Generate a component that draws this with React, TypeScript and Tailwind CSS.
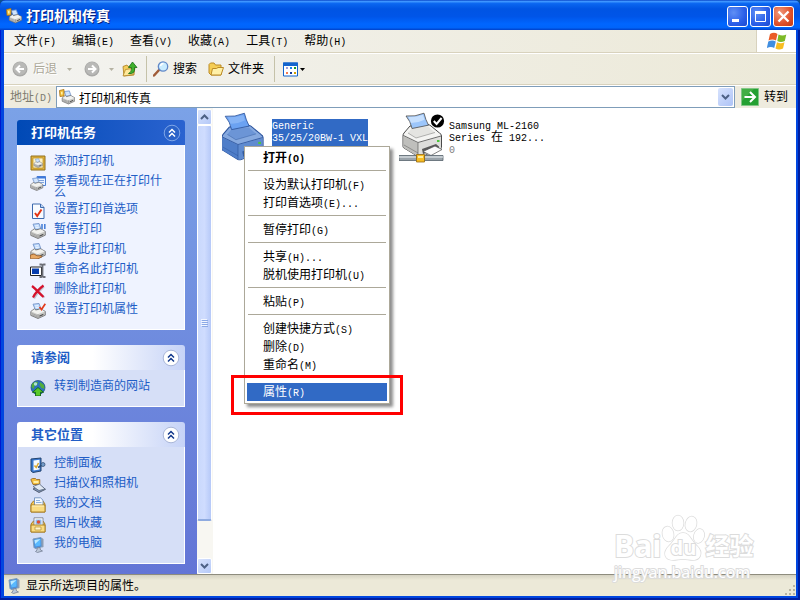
import type { ReactNode } from 'react';

type IconName =
  | 'add'
  | 'queue'
  | 'prefs'
  | 'pause'
  | 'share'
  | 'rename'
  | 'delete'
  | 'props'
  | 'globe'
  | 'control'
  | 'scanner'
  | 'docs'
  | 'pictures'
  | 'computer'
  | 'printers';

interface Task {
  icon: IconName;
  label: string;
}

interface MenuEntry {
  label: string;
  bold?: boolean;
  active?: boolean;
}

const MENUS = ['文件(F)', '编辑(E)', '查看(V)', '收藏(A)', '工具(T)', '帮助(H)'];

const PRINTER_TASKS: Task[] = [
  { icon: 'add', label: '添加打印机' },
  { icon: 'queue', label: '查看现在正在打印什么' },
  { icon: 'prefs', label: '设置打印首选项' },
  { icon: 'pause', label: '暂停打印' },
  { icon: 'share', label: '共享此打印机' },
  { icon: 'rename', label: '重命名此打印机' },
  { icon: 'delete', label: '删除此打印机' },
  { icon: 'props', label: '设置打印机属性' },
];

const SEE_ALSO: Task[] = [{ icon: 'globe', label: '转到制造商的网站' }];

const OTHER_PLACES: Task[] = [
  { icon: 'control', label: '控制面板' },
  { icon: 'scanner', label: '扫描仪和照相机' },
  { icon: 'docs', label: '我的文档' },
  { icon: 'pictures', label: '图片收藏' },
  { icon: 'computer', label: '我的电脑' },
];

const CONTEXT_MENU: MenuEntry[][] = [
  [{ label: '打开(O)', bold: true }],
  [{ label: '设为默认打印机(F)' }, { label: '打印首选项(E)...' }],
  [{ label: '暂停打印(G)' }],
  [{ label: '共享(H)...' }, { label: '脱机使用打印机(U)' }],
  [{ label: '粘贴(P)' }],
  [{ label: '创建快捷方式(S)' }, { label: '删除(D)' }, { label: '重命名(M)' }],
  [{ label: '属性(R)', active: true }],
];

// Latin runs are half as wide as the Chinese characters beside them
function Mixed({ text }: { text: string }) {
  return (
    <>
      {text.split(/([\x20-\x7e]+)/).map((part, i) =>
        i % 2 ? (
          <span key={i} className="font-['Liberation_Mono','Noto_Sans_CJK_SC',monospace] text-[10px] leading-2">
            {part}
          </span>
        ) : (
          part
        ),
      )}
    </>
  );
}

function MiniPrinter() {
  return (
    <g>
      <path d="M3 1.2 9 .4l2 5.6-5.500 1z" fill="#b9d6fb" stroke="#6d8ec4" strokeWidth=".8" />
      <path d="m5 3 3.400-.5M5.600 4.600l3.600-.5" stroke="#fff" strokeWidth=".7" />
      <path d="m.8 8.500 3.700-2.800 1 1.300 5-1.200L15.300 8.400v3.800L8 15.500.8 12.400z" fill="#c9c9c6" stroke="#6a6a6a" strokeWidth=".8" />
      <path d="m1.300 8.600 6.500 2.700 7-2.800-4-2.200-5 1.400-1.200-1.500z" fill="#f2f2ef" />
      <path d="M8 11.400v3.800" stroke="#8b8b8b" strokeWidth=".8" />
      <path d="m9.400 12.500 4-1.800v1.200l-4 1.800z" fill="#4c4c4c" />
      <path d="m2 10.500 5 2M2 11.800l5 2" stroke="#8a8a8a" strokeWidth=".6" />
    </g>
  );
}

function Folder() {
  return (
    <g>
      <path d="M1 7l2.500-3h9.500l2 3v8H1z" fill="#f2c654" stroke="#a5781a" strokeWidth=".9" />
    </g>
  );
}

const GLYPHS: Record<IconName, ReactNode> = {
  add: (
    <>
      <path d="M1 1h14v14H1z" fill="#e0b23b" stroke="#927020" />
      <path d="M3 3h10v10H3z" fill="#fff3c4" stroke="#b48b25" strokeWidth=".7" />
      <g transform="translate(3.500 3.500) scale(.58)">
        <MiniPrinter />
      </g>
    </>
  ),
  queue: (
    <>
      <path d="M7 1.5h8.500v9H7z" fill="#eaf3ff" stroke="#4c7fd2" />
      <path d="M7 1.500h8.500v2H7z" fill="#3d78dc" />
      <path d="M9 5.500h5M9 7.500h5" stroke="#7fa3dd" />
      <g transform="translate(0 2.500) scale(.84)">
        <MiniPrinter />
      </g>
    </>
  ),
  prefs: (
    <>
      <path d="M2.500 1h8L14 4.500v11H2.500z" fill="#f8fbff" stroke="#3d6aae" />
      <path d="M10.500 1v3.500H14" fill="#bcd3f4" stroke="#3d6aae" />
      <path d="m5 10 2.200 3 4.300-6.500" fill="none" stroke="#e33514" strokeWidth="2" />
    </>
  ),
  pause: (
    <>
      <MiniPrinter />
      <path d="M12 1v5M14.800 1v5" stroke="#4980d8" strokeWidth="1.600" />
    </>
  ),
  share: (
    <>
      <MiniPrinter />
      <path d="M.5 12 4 11l3 1.800h4l1 1-4 2H.5z" fill="#e8a964" stroke="#955a26" strokeWidth=".8" />
    </>
  ),
  rename: (
    <>
      <path d="M.5 4h11v8.500H.5z" fill="#fff" stroke="#222" />
      <path d="M2 5.500h7V11H2z" fill="#083eae" />
      <path d="M9.500 1.500h1.800q1.200 0 1.200 1v10q0 1.500-1.200 1.500H9.500M15.500 1.500h-1.800q-1.200 0-1.200 1v10q0 1.500 1.200 1.500h1.800" fill="none" stroke="#6c6e76" strokeWidth="1.800" />
    </>
  ),
  delete: (
    <>
      <path d="M3 4c4 3 7 7 11.500 10.500M14 3.500C10 7 6.500 11 4 15.500" fill="none" stroke="#6b6b7a" strokeWidth="2" opacity=".35" />
      <path d="M2 3c4 3 7 7 11.500 11M13.500 2.500C9.500 5.500 5.500 9.500 3 14.500" fill="none" stroke="#d6122c" strokeWidth="2.200" />
    </>
  ),
  props: (
    <>
      <MiniPrinter />
      <path d="m9.500 4 2 2.500L15.300.8" fill="none" stroke="#e23b1c" strokeWidth="1.700" />
    </>
  ),
  globe: (
    <>
      <circle cx="8" cy="7.500" r="7" fill="#2b71bd" stroke="#174778" strokeWidth=".7" />
      <path d="M2 4q3-3.300 6-2l-1 3-2.500 1-1 3-2-2zM10 2l4 3 .5 4-3-1-2-3z" fill="#52ae3b" />
      <circle cx="5.500" cy="4" r="1.700" fill="#c5edff" opacity=".8" />
      <path d="m8 7.500 5.500 4.800h-3V16h-5v-3.700h-3z" fill="#58c928" stroke="#126515" strokeWidth=".9" />
    </>
  ),
  control: (
    <>
      <path d="m1 2 10-1v13L3 15.500 1 14z" fill="#3676cf" stroke="#23446f" />
      <path d="m3.500 3.500 6-.8v9.800l-6 1z" fill="#f4faff" />
      <path d="m4.500 8.500 1.700 2L8.500 6" fill="none" stroke="#dba729" strokeWidth="1.500" />
      <path d="m8 10.500 5-3" stroke="#2b4e7a" strokeWidth="1.500" />
      <circle cx="13" cy="7.500" r="2" fill="#739cc9" stroke="#2d486d" strokeWidth=".7" />
    </>
  ),
  scanner: (
    <>
      <path d="M.8 2.500 2.500 1.500h3l1 1h3.300v5H3z" fill="#f3bd3e" stroke="#93631a" strokeWidth=".8" />
      <path d="M3.500 4h5v2h-5z" fill="#fff0a7" />
      <path d="m3 12 7-3.500 5.500 3.800-6.500 3.200z" fill="#7f94b8" stroke="#4b5669" strokeWidth=".9" />
      <path d="m3 9.500 6.500-2.500 5.500 5-6 1.500z" fill="#e2eaf5" stroke="#59677c" strokeWidth=".8" />
    </>
  ),
  docs: (
    <>
      <Folder />
      <path d="M4.500.8h6L13 3.200V10H4.500z" fill="#f4f9ff" stroke="#5f83b6" strokeWidth=".8" />
      <path d="M6 3.500h4M6 5.500h5.500" stroke="#8eb1df" />
      <path d="M1 8h14v7H1z" fill="#fadc82" stroke="#a5781a" strokeWidth=".9" />
      <path d="M2 9h12" stroke="#fff3c0" />
    </>
  ),
  pictures: (
    <>
      <Folder />
      <path d="M4 .8h9V10H4z" fill="#fff" stroke="#6e7788" strokeWidth=".8" />
      <path d="M5.500 2.500h6v5h-6z" fill="#8bbcf3" />
      <circle cx="8.500" cy="5" r="1.800" fill="#df4d31" />
      <path d="M1 8h14v7H1z" fill="#fadc82" stroke="#a5781a" strokeWidth=".9" />
      <path d="M5 10h6v3H5z" fill="#fff5c9" stroke="#b38d31" strokeWidth=".7" />
    </>
  ),
  computer: (
    <>
      <path d="m3 2 8-1.500 1 1v8.300L5 11.500l-1-1z" fill="#4b8edc" stroke="#7f9cb9" />
      <path d="m4.500 3 6-1v6.500l-5 1z" fill="#58b9ff" />
      <path d="m4.500 3 6-1L5 7z" fill="#bceaff" />
      <path d="m11 1 2.500 1v8l-1.500.5z" fill="#8c9db4" />
      <path d="m7 11 3-.5.5 2.500 2 1-5 1.500-2-1L7 13z" fill="#bcc8d9" stroke="#6b778c" strokeWidth=".7" />
    </>
  ),
  printers: (
    <>
      <g transform="translate(2.500 1.500) scale(.87)">
        <MiniPrinter />
      </g>
      <path d="m.5 1.500 4.500-1v6.500l-4 .5z" fill="#f7c33e" stroke="#a36e14" strokeWidth=".8" />
      <path d="m2 3 1.500-.3v2.500L2 5.500z" fill="#fff2a8" />
    </>
  ),
};

function Icon({ name }: { name: IconName }) {
  return (
    <svg viewBox="0 0 16 16" className="size-4 shrink-0" aria-hidden="true">
      {GLYPHS[name]}
    </svg>
  );
}

function LargePrinter({ selected = false }: { selected?: boolean }) {
  const c = selected
    ? { line: '#2b539c', top: '#86a9df', lid: '#6c95d6', left: '#4f7ec9', right: '#5f8bd0', paper: '#6ba2f2', sheen: '#8fbaf7', dark: '#345b9e', tray: '#8fb0e4' }
    : { line: '#4a4a4a', top: '#f4f4f2', lid: '#e4e4e1', left: '#bfbfbc', right: '#dededb', paper: '#9cc6fb', sheen: '#d6e8ff', dark: '#5a5a5a', tray: '#fbfbfb' };
  return (
    <svg viewBox={selected ? '4 0 45 48.75' : '0 0 48 52'} className="h-[52px] w-12 shrink-0" aria-hidden="true">
      <path d="M11 14 29 12.500q2 .5 3 1.500l8.500 7q2 1 2 3v11.500q0 1-1 1.500L22 44.500q-1.500.5-3 0L5 36q-1-.5-1-1.500V24q0-2 1-3z" fill={c.top} stroke={c.line} strokeLinejoin="round" />
      <path d="M4.500 24 19 31v13.500L5 36q-.5-.5-.5-1.500z" fill={c.left} />
      <path d="m19 31 23-6.500v11q0 1-1 1.500L22 44.200q-1.500.5-3 0z" fill={c.right} />
      <path d="M13 16 29 14.500l7 6L17 26 9 21z" fill={c.lid} />
      <path d="M4.500 23.500 19 30.500l23-6.500" fill="none" stroke={c.line} strokeWidth=".8" />
      <path d="M19 31v13" stroke={c.line} strokeWidth=".6" />
      <path d="M9 21l8 5 19-5.500" fill="none" stroke={c.dark} strokeWidth=".7" opacity=".6" />
      <path d="M7 4q9 1 18-2.800 1.500 6.500 4.500 12L13 16.500Q11.500 9 7 4z" fill={c.paper} stroke={c.line} strokeWidth=".8" />
      <path d="M9.500 5q8 .3 14.500-2.300l1.500 5Q19 11 12 11z" fill={c.sheen} opacity=".75" />
      <path d="m23 37 14-5 3 2.500v2.500l-16 5z" fill={c.dark} />
      <path d="m24 39.500 12-5.500 7 3.500-11 6z" fill={c.tray} stroke={c.line} strokeWidth=".7" />
      <path d="m5 33 14 8" stroke={c.line} strokeWidth=".7" opacity=".6" />
      <path d="M38 28h2.500v2H38z" fill="#4cc73a" />
      {!selected && (
        <>
          <path d="M0 43.500h17.500v5H0zM25.500 43.500H44v5H25.500z" fill="#9aa3aa" stroke="#55626c" strokeWidth=".8" />
          <path d="M0 45h17m9 0h18" stroke="#eef4f6" strokeWidth="1.200" />
          <path d="M17.500 42.500h8v7.500h-8z" fill="#f7bd25" stroke="#94670e" strokeWidth=".8" />
          <path d="M19 44h5v2h-5z" fill="#ffed9b" />
          <circle cx="38.500" cy="9" r="6.600" fill="#000" />
          <path d="m34.800 9 2.800 3 5-6" fill="none" stroke="#fff" strokeWidth="2" />
        </>
      )}
    </svg>
  );
}

function Caret({ dim = false }: { dim?: boolean }) {
  return (
    <svg viewBox="0 0 5 3" className={dim ? 'h-[3px] w-[5px] fill-[#b5b2a3]' : 'h-[3px] w-[5px] fill-black'} aria-hidden="true">
      <path d="M0 0h5L2.500 3z" />
    </svg>
  );
}

function Chevron({ up = false }: { up?: boolean }) {
  return (
    <svg viewBox="0 0 9 6" className="h-[6px] w-[9px]" aria-hidden="true">
      <path d={up ? 'M1 5l3.500-3.500L8 5' : 'M1 1l3.500 3.500L8 1'} fill="none" stroke="#4d6185" strokeWidth="2" />
    </svg>
  );
}

function RoundArrow({ flip = false }: { flip?: boolean }) {
  return (
    <svg viewBox="0 0 16 16" className="size-4" aria-hidden="true">
      <circle cx="8" cy="8" r="7.500" fill="#a9a9a7" />
      <circle cx="8" cy="7.500" r="6.500" fill="#b9b9b7" />
      <path d={flip ? 'M4 8h7M8 4.500 11.500 8 8 11.500' : 'M12 8H5M8 4.500 4.500 8 8 11.500'} fill="none" stroke="#fff" strokeWidth="2" />
    </svg>
  );
}

function TitleBar() {
  return (
    <header className="flex h-[30px] items-center gap-1 rounded-t-[6px] bg-[linear-gradient(180deg,#0a46c8_0%,#3d95ff_5%,#0a66f0_12%,#0054e3_30%,#0055e8_55%,#0066ff_80%,#0064fa_92%,#0040c8_100%)] pt-[2px] pr-[6px] pl-[6px]">
      <Icon name="printers" />
      <h1 className="flex-1 text-[14px] font-bold text-white [text-shadow:1px_1px_#0a1f7a]">打印机和传真</h1>
      <div className="flex gap-[2px]">
        <button aria-label="最小化" className="size-[21px] rounded-[3px] border border-white bg-[radial-gradient(circle_at_30%_30%,#5f8ff5,#2a5ee8_60%,#1c49cf)]">
          <svg viewBox="0 0 19 19" aria-hidden="true">
            <path d="M4 12h7v3H4z" fill="#fff" />
          </svg>
        </button>
        <button aria-label="最大化" className="size-[21px] rounded-[3px] border border-white bg-[radial-gradient(circle_at_30%_30%,#5f8ff5,#2a5ee8_60%,#1c49cf)]">
          <svg viewBox="0 0 19 19" aria-hidden="true">
            <path d="M4.500 5v9.500h10V5z" fill="none" stroke="#fff" />
            <path d="M4 4h11v3H4z" fill="#fff" />
          </svg>
        </button>
        <button aria-label="关闭" className="size-[21px] rounded-[3px] border border-white bg-[radial-gradient(circle_at_30%_30%,#f0997c,#e0502a_60%,#c23a12)]">
          <svg viewBox="0 0 19 19" aria-hidden="true">
            <path d="m4.500 4.500 10 10m0-10-10 10" stroke="#fff" strokeWidth="2.300" />
          </svg>
        </button>
      </div>
    </header>
  );
}

function MenuBar() {
  return (
    <div className="flex h-[23px] border-b border-[#d8d2bd] bg-[linear-gradient(90deg,#f3f3f0,#ece9d8)]">
      <nav className="flex flex-1 items-center pl-[2px]">
        {MENUS.map((m) => (
          <button key={m} className="px-2 whitespace-nowrap">
            <Mixed text={m} />
          </button>
        ))}
      </nav>
      <div className="flex w-10 items-center justify-center border-l border-[#d8d2bd] bg-white">
        <svg viewBox="0 0 20 18" className="h-[18px] w-5" aria-hidden="true">
          <path d="M3 2q4-2.500 7.500 0L9 8.500Q5.500 6.500 1.500 8.500z" fill="#ea5b27" />
          <path d="M11.500 2.500q4 2 7.800 0L17.800 9q-4 2-7.500 0z" fill="#7dba27" />
          <path d="M1.300 9.500q4-2.200 7.500 0L7.200 16Q4 14-.2 16z" fill="#408ee0" />
          <path d="M10 10.200q3.700 2 7.500 0L16 16.500q-4 2-7.500 0z" fill="#f8bd20" />
        </svg>
      </div>
    </div>
  );
}

function Toolbar() {
  return (
    <div className="flex h-8 items-center border-t border-b border-t-white border-b-[#d8d2bd] bg-[linear-gradient(90deg,#f3f3f0,#ece9d8)] pl-2">
      <button disabled className="flex items-center gap-[5px] text-[#aca899] [text-shadow:1px_1px_white]">
        <RoundArrow />
        后退
      </button>
      <button disabled aria-label="后退列表" className="ml-[10px]">
        <Caret dim />
      </button>
      <button disabled aria-label="前进" className="ml-3">
        <RoundArrow flip />
      </button>
      <button disabled aria-label="前进列表" className="ml-[9px]">
        <Caret dim />
      </button>
      <button aria-label="向上" className="ml-2">
        <svg viewBox="0 0 16 16" className="size-4" aria-hidden="true">
          <path d="M1 5.500 5 4l1 1.500 6-.5v9L2 15z" fill="#f5cf5b" stroke="#b2862a" strokeWidth=".9" />
          <path d="m1 15 2.500-6.500L13 7l-1.500 6.500z" fill="#ffe99b" stroke="#b2862a" strokeWidth=".8" />
          <path d="M6.500 12.500q3.500-1 3-6H6.500L10.500 1l4.500 5.500h-2.500q1 7-6 6z" fill="#3fb12b" stroke="#176b19" strokeWidth=".8" />
        </svg>
      </button>
      <span className="mr-[6px] ml-2 h-[26px] w-px bg-[#c5c2a9]" />
      <button className="flex items-center gap-1">
        <svg viewBox="0 0 16 16" className="size-4" aria-hidden="true">
          <path d="m1 14.500 5.500-6" stroke="#a05c38" strokeWidth="2.500" strokeLinecap="round" />
          <circle cx="10" cy="5.500" r="4.700" fill="#c9ecff" stroke="#6289c8" strokeWidth="1.300" />
          <path d="M7.500 5q.5-2.500 3-2.500" fill="none" stroke="#fff" strokeWidth="1.500" />
        </svg>
        搜索
      </button>
      <button className="ml-[11px] flex items-center gap-1">
        <svg viewBox="0 0 16 16" className="size-4" aria-hidden="true">
          <path d="M1 3.500 2.500 2H6l1.500 2H13v10H3l-2-2z" fill="#f5cd54" stroke="#bb8b27" />
          <path d="m3 14 1.500-6.500h4l1.500-1h5.500L13 14z" fill="#fff0a7" stroke="#bb8b27" />
        </svg>
        文件夹
      </button>
      <span className="mr-2 ml-[10px] h-[26px] w-px bg-[#c5c2a9]" />
      <button aria-label="查看" className="flex items-center gap-[2px]">
        <svg viewBox="0 0 15 15" className="size-[15px]" aria-hidden="true">
          <path d="M.5 1h14v13H.5z" fill="#fff" stroke="#1264cd" />
          <path d="M0 .5h15V4H0z" fill="#1264cd" />
          <path d="M3 5h2v2H3z" fill="#9fa0d7" />
          <path d="M7 5h2v2H7z" fill="#1683ef" />
          <path d="M11 5h2v2h-2z" fill="#159b2a" />
          <path d="M3 10h2v2H3z" fill="#f47a50" />
          <path d="M7 10h2v2H7z" fill="#153a9a" />
          <path d="M11 10h2v2h-2z" fill="#d2a000" />
        </svg>
        <Caret />
      </button>
    </div>
  );
}

function AddressBar() {
  return (
    <div className="flex h-[23px] items-stretch border-t border-white bg-[#eeebde]">
      <label htmlFor="address" className="flex w-[52px] items-center pl-[6px] text-[#7d7b70]">
        <span>
          <Mixed text="地址(D)" />
        </span>
      </label>
      <div className="flex flex-1 items-center border border-[#7f9db9] bg-white pr-px pl-[2px]">
        <Icon name="printers" />
        <input id="address" defaultValue="打印机和传真" className="ml-1 min-w-0 flex-1 outline-none" />
        <button aria-label="地址列表" className="flex h-[18px] w-[15px] items-center justify-center rounded-[2px] bg-[linear-gradient(135deg,#d8e3fd,#adc3f7)]">
          <Chevron />
        </button>
      </div>
      <button className="flex w-[61px] items-center gap-[5px] pl-[6px]">
        <svg viewBox="0 0 18 18" className="size-[18px]" aria-hidden="true">
          <path d="M.5.5h17v17H.5z" fill="#24a032" stroke="#80c686" />
          <path d="M1 13V1h12z" fill="#56b850" opacity=".6" />
          <path d="M3.500 9h10M9 4l5 5-5 5" fill="none" stroke="#fff" strokeWidth="2" />
        </svg>
        转到
      </button>
    </div>
  );
}

interface TaskPanelProps {
  title: string;
  tasks: Task[];
  primary?: boolean;
}

function TaskPanel({ title, tasks, primary = false }: TaskPanelProps) {
  return (
    <section>
      <h2
        className={
          primary
            ? 'flex h-[25px] items-center justify-between rounded-t-[3px] bg-[linear-gradient(90deg,#0049b5,#2b63d0)] pr-1 pl-[14px] text-[13px] font-bold text-white'
            : 'flex h-[25px] items-center justify-between rounded-t-[3px] bg-[linear-gradient(90deg,#ffffff_45%,#c6d3f7)] pr-[5px] pl-[14px] text-[13px] font-bold text-[#215dc6]'
        }
      >
        {title}
        <button aria-label={`折叠${title}`}>
          <svg viewBox="0 0 18 18" className="size-[18px]" aria-hidden="true">
            <circle cx="9" cy="9" r="7.800" fill={primary ? '#2a62c8' : '#fff'} stroke={primary ? '#7fa6e8' : '#a9b6d8'} />
            <path d="m6 8.500 3-3 3 3M6 12.500l3-3 3 3" fill="none" stroke={primary ? '#fff' : '#12388c'} strokeWidth="1.500" />
          </svg>
        </button>
      </h2>
      <ul
        className={
          primary
            ? 'border border-t-0 border-white bg-[#eff3ff] pt-[10px] pr-[22px] pb-[6px] pl-3'
            : 'border border-t-0 border-white bg-[#d6dff7] pt-[10px] pr-[22px] pb-[6px] pl-3'
        }
      >
        {tasks.map((t) => (
          <li key={t.label} className="pb-1">
            <a href="#" className="flex gap-2 leading-3 text-[#215dc6]">
              <Icon name={t.icon} />
              <span>{t.label}</span>
            </a>
          </li>
        ))}
      </ul>
    </section>
  );
}

function ScrollBar() {
  return (
    <div className="flex w-4 flex-col bg-[#f8f7f2] pt-px pr-px">
      <button aria-label="向上滚动" className="flex h-4 items-center justify-center rounded-[2px] border border-white bg-[linear-gradient(135deg,#d8e3fd,#b5c9f8)]">
        <Chevron up />
      </button>
      <div className="flex flex-1 flex-col pb-[37px]">
        <div className="flex flex-1 items-center justify-center rounded-[2px] border border-b-2 border-white border-b-[#8fabe0] bg-[linear-gradient(90deg,#c9d8fc,#cfdcfe_50%,#b6c9f8)]">
          <svg viewBox="0 0 7 8" className="h-2 w-[7px]" aria-hidden="true">
            <path d="M0 .5h6m-6 2h6m-6 2h6m-6 2h6" stroke="#f2f6ff" />
            <path d="M1 1.500h6m-6 2h6m-6 2h6m-6 2h6" stroke="#8ca9e6" />
          </svg>
        </div>
      </div>
      <button aria-label="向下滚动" className="flex h-4 items-center justify-center rounded-[2px] border border-white bg-[linear-gradient(135deg,#d8e3fd,#b5c9f8)]">
        <Chevron />
      </button>
    </div>
  );
}

function ContextMenu() {
  return (
    <div className="absolute top-[38px] left-[31px] w-[146px] border border-[#aca899] bg-white p-[2px] shadow-[3px_3px_3px_rgba(0,0,0,0.45)]">
      {CONTEXT_MENU.map((group, i) => (
        <div key={i}>
          {i > 0 && <hr className="mx-px mt-[3px] mb-[5px] border-[#aca899]" />}
          {group.map((entry) => (
            <button
              key={entry.label}
              className={
                entry.active
                  ? 'block h-[18px] w-full bg-[#316ac5] pl-4 text-left text-white'
                  : entry.bold
                  ? 'block h-[18px] w-full pl-4 text-left font-bold'
                  : 'block h-[18px] w-full pl-4 text-left'
              }
            >
              <Mixed text={entry.label} />
            </button>
          ))}
        </div>
      ))}
      {/* Callout round the last entry */}
      <div className="pointer-events-none absolute -right-[14px] -bottom-3 -left-[14px] h-10 border-3 border-[#f00]" />
    </div>
  );
}

function Watermark() {
  return (
    <div className="pointer-events-none absolute right-10 bottom-[14px] w-[142px] text-white [-webkit-text-stroke:2px_#dcdcdc] [paint-order:stroke_fill]">
      <div className="flex items-end font-['Open_Sans','Noto_Sans_CJK_SC',sans-serif] font-bold">
        <span className="text-[30px] leading-8">Bai</span>
        <span className="relative">
          <svg viewBox="0 0 44 48" className="h-12 w-11" aria-hidden="true">
            <g fill="#fff" stroke="#dcdcdc" strokeWidth="1.500">
              <ellipse cx="7" cy="20" rx="5.500" ry="7.500" transform="rotate(-12 7 20)" />
              <ellipse cx="17" cy="9" rx="5.500" ry="7.500" />
              <ellipse cx="30" cy="10" rx="5.500" ry="7.500" transform="rotate(14 30 10)" />
              <ellipse cx="38" cy="22" rx="5" ry="7" transform="rotate(16 38 22)" />
              <path d="M22 19c7 0 8 8 14 13 7 7 3 14-4 14-4 0-6-1-10-1s-6 1-10 1C4 46 1 39 8 32c6-5 7-13 14-13z" />
            </g>
          </svg>
          <span className="absolute inset-x-0 bottom-1 text-center text-[20px] leading-5">du</span>
        </span>
        <span className="text-[24px] leading-8">经验</span>
      </div>
      <div className="font-['Open_Sans',sans-serif] text-[16px] leading-5">jingyan.baidu.com</div>
    </div>
  );
}

export default function App() {
  return (
    <div className="bg-[#0d4f8f] font-['Liberation_Sans','Noto_Sans_CJK_SC',sans-serif] text-[12px] leading-3 text-black">
      <div className="flex min-h-screen flex-col rounded-t-[6px] bg-[#0046e0] shadow-[inset_-2px_-2px_#001ea0,inset_1px_0_#0019cf]">
        <TitleBar />
        <div className="relative mx-1 mb-1 flex flex-1 flex-col">
          <MenuBar />
          <Toolbar />
          <AddressBar />

          <div className="flex flex-1">
            <aside className="flex w-[193px] shrink-0 flex-col gap-[15px] bg-[linear-gradient(180deg,#7ba2e7,#6375d6)] pt-3 pr-3 pb-[9px] pl-[13px]">
              <TaskPanel title="打印机任务" tasks={PRINTER_TASKS} primary />
              <TaskPanel title="请参阅" tasks={SEE_ALSO} />
              <TaskPanel title="其它位置" tasks={OTHER_PLACES} />
            </aside>
            <ScrollBar />
            <main className="relative flex-1 bg-white">
              <div className="flex gap-[31px] pt-1 pl-[9px]">
                <div className="flex gap-[2px]">
                  <LargePrinter selected />
                  <p className="mt-[7px] h-9 w-24 bg-[#316ac5] whitespace-nowrap text-white">
                    <Mixed text="Generic" />
                    <br />
                    <Mixed text="35/25/20BW-1 VXL" />
                    <br />
                    <Mixed text="C..." />
                  </p>
                </div>
                <div className="flex gap-[2px]">
                  <LargePrinter />
                  <p className="mt-[7px] whitespace-nowrap">
                    <Mixed text="Samsung ML-2160" />
                    <br />
                    <Mixed text="Series 在 192..." />
                    <br />
                    <span className="text-[#808080]">
                      <Mixed text="0" />
                    </span>
                  </p>
                </div>
              </div>
              <ContextMenu />
            </main>
          </div>

          <footer className="flex h-[22px] items-center gap-1 border-t border-[#8e8c7e] bg-[linear-gradient(180deg,#d5d2c2,#ece9d8_25%)] pl-[2px]">
            <Icon name="computer" />
            <span className="flex-1">显示所选项目的属性。</span>
            <svg viewBox="0 0 12 12" className="mt-2 size-3" aria-hidden="true">
              <path d="M9 1h2v2H9zM5 5h2v2H5zM9 5h2v2H9zM1 9h2v2H1zM5 9h2v2H5zM9 9h2v2H9z" fill="#b8b4a2" />
            </svg>
          </footer>
          <Watermark />
        </div>
      </div>
    </div>
  );
}
